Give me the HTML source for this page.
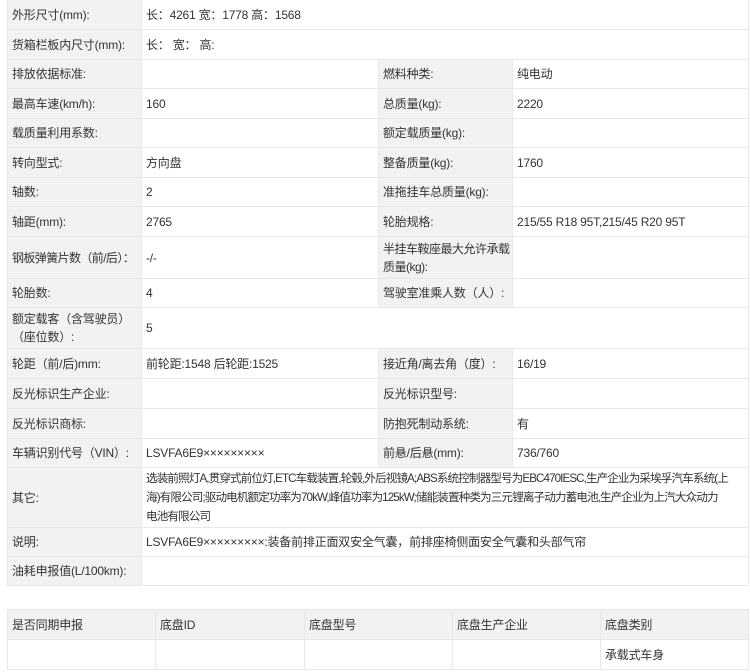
<!DOCTYPE html>
<html><head><meta charset="utf-8"><style>
body{margin:0;width:750px;height:672px;background:#fff;font-family:"Liberation Sans","Noto Sans CJK SC",sans-serif;font-size:12px;color:#333;overflow:hidden}
table{position:absolute;left:7px;width:741px;border-collapse:collapse;table-layout:fixed}
td{border:1px solid #e8e8e8;padding:0 4px;vertical-align:middle;line-height:18px;white-space:nowrap;letter-spacing:-0.2px;overflow:hidden}
td.l{background:#f2f2f2}
</style></head><body>
<table style="top:-1px">
<colgroup><col style="width:134px"><col style="width:237px"><col style="width:134px"><col style="width:236px"></colgroup>
<tr style="height:30px"><td class="l">外形尺寸(mm):</td><td colspan="3">长：4261 宽：1778 高：1568</td></tr>
<tr style="height:30px"><td class="l">货箱栏板内尺寸(mm):</td><td colspan="3">长： 宽： 高:</td></tr>
<tr style="height:29px"><td class="l">排放依据标准:</td><td></td><td class="l">燃料种类:</td><td>纯电动</td></tr>
<tr style="height:30px"><td class="l">最高车速(km/h):</td><td>160</td><td class="l">总质量(kg):</td><td>2220</td></tr>
<tr style="height:29px"><td class="l">载质量利用系数:</td><td></td><td class="l">额定载质量(kg):</td><td></td></tr>
<tr style="height:30px"><td class="l">转向型式:</td><td>方向盘</td><td class="l">整备质量(kg):</td><td>1760</td></tr>
<tr style="height:29px"><td class="l">轴数:</td><td>2</td><td class="l">准拖挂车总质量(kg):</td><td></td></tr>
<tr style="height:30px"><td class="l">轴距(mm):</td><td>2765</td><td class="l">轮胎规格:</td><td>215/55 R18 95T,215/45 R20 95T</td></tr>
<tr style="height:42px"><td class="l" style="letter-spacing:-0.6px">钢板弹簧片数（前/后）：</td><td>-/-</td><td class="l" style="letter-spacing:-0.5px">半挂车鞍座最大允许承载<br>质量(kg):</td><td></td></tr>
<tr style="height:29px"><td class="l">轮胎数:</td><td>4</td><td class="l">驾驶室准乘人数（人）:</td><td></td></tr>
<tr style="height:41px"><td class="l">额定载客（含驾驶员）<br>（座位数）:</td><td colspan="3">5</td></tr>
<tr style="height:30px"><td class="l">轮距（前/后)mm:</td><td>前轮距:1548 后轮距:1525</td><td class="l">接近角/离去角（度）:</td><td>16/19</td></tr>
<tr style="height:30px"><td class="l">反光标识生产企业:</td><td></td><td class="l">反光标识型号:</td><td></td></tr>
<tr style="height:30px"><td class="l">反光标识商标:</td><td></td><td class="l">防抱死制动系统:</td><td>有</td></tr>
<tr style="height:29px"><td class="l">车辆识别代号（VIN）:</td><td>LSVFA6E9×××××××××</td><td class="l">前悬/后悬(mm):</td><td>736/760</td></tr>
<tr style="height:60px"><td class="l">其它:</td><td colspan="3" style="line-height:19px;letter-spacing:-0.9px;font-size:11.6px">选装前照灯A,贯穿式前位灯,ETC车载装置,轮毂,外后视镜A;ABS系统控制器型号为EBC470IESC,生产企业为采埃孚汽车系统(上<br>海)有限公司;驱动电机额定功率为70kW,峰值功率为125kW;储能装置种类为三元锂离子动力蓄电池,生产企业为上汽大众动力<br>电池有限公司</td></tr>
<tr style="height:29px"><td class="l">说明:</td><td colspan="3">LSVFA6E9×××××××××:装备前排正面双安全气囊，前排座椅侧面安全气囊和头部气帘</td></tr>
<tr style="height:29px"><td class="l">油耗申报值(L/100km):</td><td colspan="3"></td></tr>
</table>
<table style="top:609px">
<colgroup><col style="width:148px"><col style="width:149px"><col style="width:148px"><col style="width:148px"><col style="width:148px"></colgroup>
<tr style="height:30px"><td class="l">是否同期申报</td><td class="l">底盘ID</td><td class="l">底盘型号</td><td class="l">底盘生产企业</td><td class="l">底盘类别</td></tr>
<tr style="height:30px"><td></td><td></td><td></td><td></td><td>承载式车身</td></tr>
</table>
</body></html>
